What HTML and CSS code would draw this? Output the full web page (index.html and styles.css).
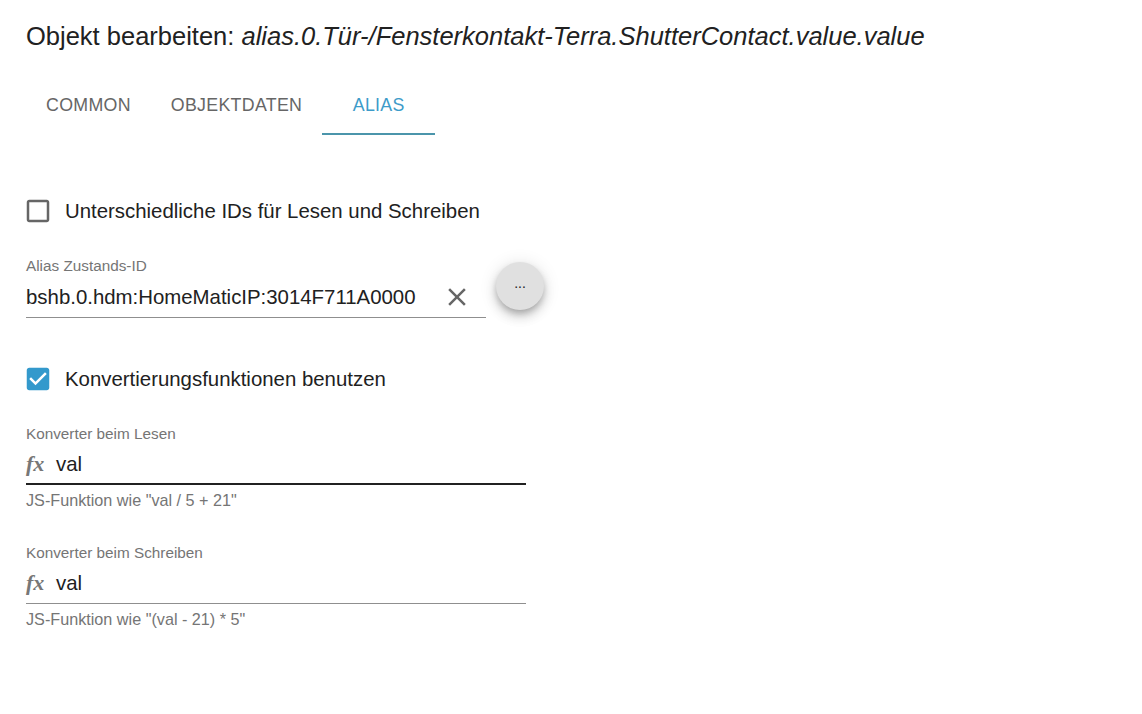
FILE: index.html
```html
<!DOCTYPE html>
<html lang="de">
<head>
<meta charset="utf-8">
<title>Objekt bearbeiten</title>
<link rel="stylesheet" href="styles.css">
</head>
<body>
<div class="dialog">
  <h1 class="title">Objekt bearbeiten: <i>alias.0.Tür-/Fensterkontakt-Terra.ShutterContact.value.value</i></h1>
  <div class="tabs">
    <div class="tab">COMMON</div>
    <div class="tab">OBJEKTDATEN</div>
    <div class="tab active">ALIAS</div>
  </div>

  <div class="content">
    <label class="check-row first">
      <svg class="cb" viewBox="0 0 24 24" width="30" height="30"><path fill="#666" d="M19 5v14H5V5h14m0-2H5c-1.1 0-2 .9-2 2v14c0 1.1.9 2 2 2h14c1.1 0 2-.9 2-2V5c0-1.1-.9-2-2-2z"/></svg>
      <span class="check-label">Unterschiedliche IDs für Lesen und Schreiben</span>
    </label>

    <div class="id-row">
      <div class="field id-field">
        <div class="field-label">Alias Zustands-ID</div>
        <div class="input-row">
          <span class="input-text clip">bshb.0.hdm:HomeMaticIP:3014F711A0000</span>
          <svg class="clear" viewBox="0 0 24 24" width="30" height="30"><path fill="#666" d="M19 6.41L17.59 5 12 10.59 6.41 5 5 6.41 10.59 12 5 17.59 6.41 19 12 13.41 17.59 19 19 17.59 13.41 12z"/></svg>
        </div>
      </div>
      <button class="fab">...</button>
    </div>

    <label class="check-row second">
      <svg class="cb" viewBox="0 0 24 24" width="30" height="30"><path fill="#3399cc" d="M19 3H5c-1.11 0-2 .9-2 2v14c0 1.1.89 2 2 2h14c1.11 0 2-.9 2-2V5c0-1.1-.89-2-2-2zm-9 14l-5-5 1.41-1.41L10 14.17l7.59-7.59L19 8l-9 9z"/></svg>
      <span class="check-label">Konvertierungsfunktionen benutzen</span>
    </label>

    <div class="field conv read">
      <div class="field-label">Konverter beim Lesen</div>
      <div class="input-row focused">
        <span class="fx">fx</span>
        <span class="input-text">val</span>
      </div>
      <div class="helper">JS-Funktion wie "val / 5 + 21"</div>
    </div>

    <div class="field conv write">
      <div class="field-label">Konverter beim Schreiben</div>
      <div class="input-row">
        <span class="fx">fx</span>
        <span class="input-text">val</span>
      </div>
      <div class="helper">JS-Funktion wie "(val - 21) * 5"</div>
    </div>
  </div>
</div>
</body>
</html>
```

FILE: styles.css
```css
html, body {
  margin: 0;
  padding: 0;
  background: #fff;
}
body {
  font-family: "Liberation Sans", Arial, sans-serif;
  color: #212121;
  width: 1142px;
  height: 714px;
  overflow: hidden;
}
.dialog {
  padding: 20px 0 0 26px;
}
.title {
  margin: 0;
  font-size: 25.5px;
  font-weight: 400;
  line-height: 32px;
  color: #212121;
  white-space: nowrap;
}
.title i {
  font-style: italic;
}
.tabs {
  display: flex;
  margin-top: 23px;
  height: 60px;
}
.tab {
  padding: 0 20px;
  min-width: 113px;
  box-sizing: border-box;
  display: flex;
  align-items: center;
  justify-content: center;
  font-size: 17.8px;
  letter-spacing: 0.3px;
  color: #666;
}
.tab:first-child {
  min-width: 0;
}
.tab.active {
  color: #3d9bc9;
  border-bottom: 2.5px solid #4b95ab;
  height: 60px;
  padding-top: 2px;
}
.content {
  display: flex;
  flex-direction: column;
}
.check-row {
  display: flex;
  align-items: center;
  height: 30px;
}
.check-row.first { margin-top: 61px; }
.check-row.second { margin-top: 46px; }
.cb {
  margin-left: -3px;
  flex: none;
}
.check-label {
  margin-left: 12px;
  font-size: 20.4px;
  color: #212121;
}
.id-row {
  display: flex;
  align-items: flex-start;
  margin-top: 31px;
}
.field {
  display: flex;
  flex-direction: column;
}
.id-field {
  width: 460px;
}
.field-label {
  font-size: 15.3px;
  line-height: 18px;
  color: #757575;
}
.input-row {
  display: flex;
  align-items: center;
  padding: 10px 0 8px;
  height: 24px;
  line-height: 24px;
  border-bottom: 1px solid #8f8f8f;
}
.input-text {
  font-size: 20.4px;
  color: #212121;
}
.clip {
  width: 416px;
  overflow: hidden;
  white-space: nowrap;
}
.clear {
  margin: -3px 0;
  flex: none;
}
.fab {
  margin: 5px 0 0 10px;
  width: 48px;
  height: 48px;
  border-radius: 50%;
  border: none;
  background: #e0e0e0;
  color: #222;
  font-family: "Liberation Sans", sans-serif;
  font-size: 14px;
  line-height: 1;
  padding: 0 0 6px;
  box-shadow: 0 4px 6px -1px rgba(0,0,0,0.2), 0 7px 12px 0 rgba(0,0,0,0.14), 0 2px 18px 0 rgba(0,0,0,0.12);
}
.conv {
  width: 500px;
}
.conv.read { margin-top: 31px; }
.conv.write { margin-top: 35px; }
.conv .input-row {
  padding: 9px 0 8px;
}
.conv .input-row.focused {
  padding-bottom: 7px;
  border-bottom: 2px solid #212121;
}
.fx {
  font-family: "Liberation Serif", "DejaVu Serif", serif;
  font-style: italic;
  font-weight: 700;
  font-size: 22px;
  color: #777;
  width: 30px;
}
.helper {
  margin-top: 6px;
  font-size: 16.2px;
  line-height: 18px;
  color: #757575;
}
```
